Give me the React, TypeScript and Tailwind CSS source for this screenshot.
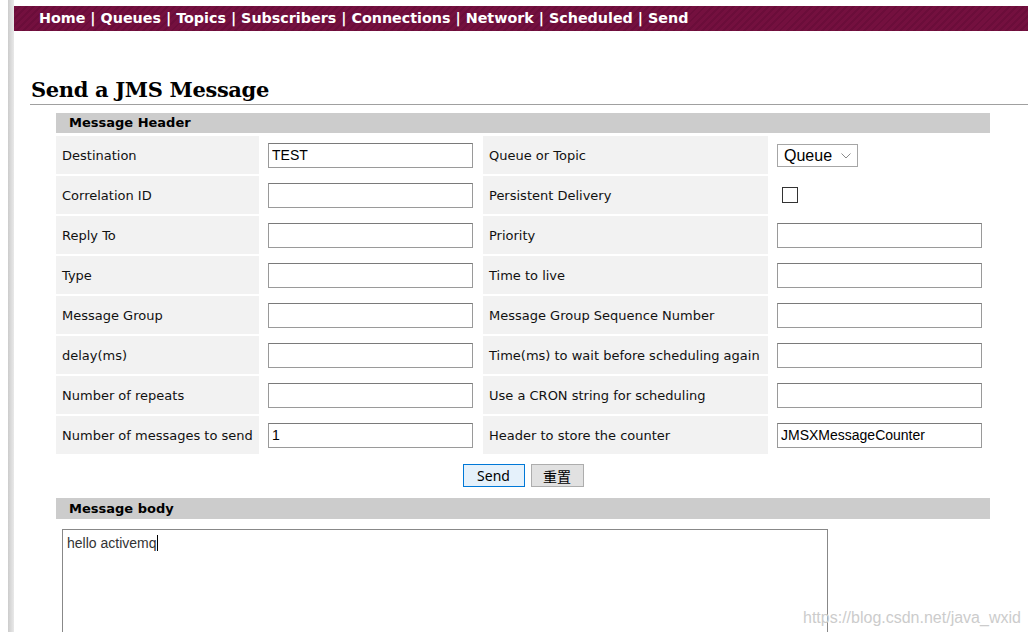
import type { ReactNode } from 'react';

const navLinks = ['Home', 'Queues', 'Topics', 'Subscribers', 'Connections', 'Network', 'Scheduled', 'Send'];

function TextBox({ value = '' }: { value?: string }) {
  return (
    <input
      readOnly
      value={value}
      className="w-[205px] h-[25px] border border-[#9a9a9a] border-t-[#7a7a7a] bg-white px-[3px] text-[14px] text-black font-['Liberation_Sans',Arial,sans-serif] outline-none"
    />
  );
}

function QueueSelect() {
  return (
    <div className="w-[81px] h-[23px] border border-[#a6a6a6] bg-white flex items-center justify-between pl-[6px] pr-[6px] pt-[2px] font-['Liberation_Sans',Arial,sans-serif] text-[16px] text-black">
      <span>Queue</span>
      <svg width="10" height="6" viewBox="0 0 10 6" fill="none">
        <path d="M0.5 0.5 L5 5 L9.5 0.5" stroke="#8a8a8a" strokeWidth="1" />
      </svg>
    </div>
  );
}

type Row = { label: string; field: ReactNode; label2: string; field2: ReactNode };

const rows: Row[] = [
  { label: 'Destination', field: <TextBox value="TEST" />, label2: 'Queue or Topic', field2: <QueueSelect /> },
  {
    label: 'Correlation ID',
    field: <TextBox />,
    label2: 'Persistent Delivery',
    field2: <div className="ml-[5px] w-[16px] h-[16px] border border-[#333333] bg-white" />,
  },
  { label: 'Reply To', field: <TextBox />, label2: 'Priority', field2: <TextBox /> },
  { label: 'Type', field: <TextBox />, label2: 'Time to live', field2: <TextBox /> },
  { label: 'Message Group', field: <TextBox />, label2: 'Message Group Sequence Number', field2: <TextBox /> },
  { label: 'delay(ms)', field: <TextBox />, label2: 'Time(ms) to wait before scheduling again', field2: <TextBox /> },
  { label: 'Number of repeats', field: <TextBox />, label2: 'Use a CRON string for scheduling', field2: <TextBox /> },
  {
    label: 'Number of messages to send',
    field: <TextBox value="1" />,
    label2: 'Header to store the counter',
    field2: <TextBox value="JMSXMessageCounter" />,
  },
];

export default function App() {
  return (
    <div className="relative flex h-[632px] w-[1028px] overflow-hidden bg-white">
      <div className="w-[8px] shrink-0 bg-white" />
      <div className="w-[6px] shrink-0 bg-[linear-gradient(to_right,#cccccc,#e9e9e9)]" />

      <div className="flex-1 pt-[6px]">
        <div className="h-[25px] flex items-center pl-[25px] pt-[1px] bg-[repeating-linear-gradient(135deg,#74103f_0px,#74103f_3px,#6b0d3a_3px,#6b0d3a_5px)] font-['DejaVu_Sans',Verdana,sans-serif] font-bold text-[14.3px] text-white whitespace-pre">
          {navLinks.join(' | ')}
        </div>

        <h1 className="ml-[16px] mt-[45px] pl-[1px] h-[29px] border-b border-[#a0a0a0] font-['DejaVu_Serif',Georgia,serif] font-bold text-[21px] tracking-[-0.35px] leading-[28px] text-black">
          Send a JMS Message
        </h1>

        <div className="ml-[42px] w-[934px] mt-[8px] font-['DejaVu_Sans',Verdana,sans-serif] text-[13px] text-[#111111]">
          <div className="h-[20px] bg-[#cccccc] pl-[13px] flex items-center font-bold text-black">Message Header</div>

          <div className="mt-[3px] grid grid-cols-[203px_220px_285px_220px] gap-[2px]">
            {rows.map((r) => (
              <div key={r.label} className="contents">
                <div className="h-[38px] bg-[#f2f2f2] pl-[6px] pt-[2px] flex items-center">{r.label}</div>
                <div className="h-[38px] pl-[7px] flex items-center">{r.field}</div>
                <div className="h-[38px] bg-[#f2f2f2] pl-[6px] pt-[2px] flex items-center">{r.label2}</div>
                <div className="h-[38px] pl-[7px] flex items-center">{r.field2}</div>
              </div>
            ))}
          </div>

          <div className="mt-[10px] flex justify-center gap-[6px]">
            <button className="w-[62px] h-[23px] border border-[#0078d7] bg-[#e5f1fb] text-[14px] text-black font-['Noto_Sans',sans-serif] leading-none">
              Send
            </button>
            <button className="w-[53px] h-[23px] border border-[#adadad] bg-[#e1e1e1] text-[14px] text-black font-['Noto_Sans_CJK_SC',sans-serif] leading-none">
              重置
            </button>
          </div>

          <div className="mt-[11px] h-[21px] bg-[#cccccc] pl-[13px] flex items-center font-bold text-black">Message body</div>

          <div className="mt-[10px] ml-[6px] w-[766px] h-[130px] border border-[#888888] bg-white px-[4px] pt-[4px] font-['Liberation_Sans',Arial,sans-serif] text-[14px] text-[#333333] leading-[18px]">
            hello activemq
            <span className="inline-block w-px h-[16px] bg-black align-[-3px]" />
          </div>
        </div>
      </div>

      <div className="absolute left-[803px] top-[606px] font-['Liberation_Sans',Arial,sans-serif] text-[16px] text-[#cccccc]">
        https://blog.csdn.net/java_wxid
      </div>
    </div>
  );
}
